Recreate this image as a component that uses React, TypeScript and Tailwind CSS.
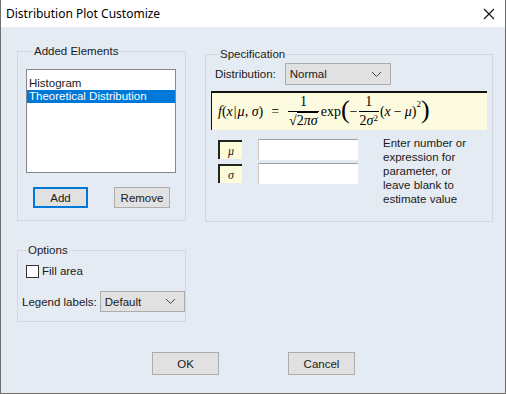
import React from "react";

const ui = { fontFamily: '"Liberation Sans", Arial, sans-serif' };
const title = { fontFamily: '"Noto Sans", "Open Sans", Arial, sans-serif' };
const serif = { fontFamily: '"Liberation Serif", "DejaVu Serif", serif' };

function Chevron() {
  return (
    <svg width="11" height="7" viewBox="0 0 11 7" className="text-[#444]">
      <path d="M1 1l4.5 4.5L10 1" fill="none" stroke="currentColor" strokeWidth="1" />
    </svg>
  );
}

function Select({ value, className }: { value: string; className: string }) {
  return (
    <div className={"flex items-center justify-between border border-[#adadad] bg-[#e1e1e1] pl-[4px] pr-[8px] " + className}>
      <span>{value}</span>
      <Chevron />
    </div>
  );
}

function Btn({ label, className }: { label: string; className: string }) {
  return (
    <div className={"flex items-center justify-center bg-[#e1e1e1] " + className}>{label}</div>
  );
}

function Frac({ top, bottom }: { top: React.ReactNode; bottom: React.ReactNode }) {
  return (
    <span className="inline-flex flex-col items-center mx-[1px] align-middle leading-none">
      <span className="px-[2px] pb-[2px]">{top}</span>
      <span className="border-t border-black px-[1px] pt-[2px]">{bottom}</span>
    </span>
  );
}

function Formula() {
  return (
    <div className="flex items-center text-[14px] text-black" style={serif}>
      <span className="italic">f</span>
      <span>(</span>
      <span className="italic">x</span>
      <span className="mx-[1px]">|</span>
      <span className="italic">μ</span>
      <span>,&nbsp;</span>
      <span className="italic">σ</span>
      <span>)</span>
      <span className="mx-[8px]">=</span>
      <Frac
        top="1"
        bottom={
          <span>
            √<span className="border-t border-black">2<span className="italic">πσ</span></span>
          </span>
        }
      />
      <span className="ml-[1px]">exp</span>
      <span className="text-[26px] leading-none -mt-[3px] font-light">(</span>
      <span>−</span>
      <Frac top="1" bottom={<span>2<span className="italic">σ</span><sup className="text-[9px]">2</sup></span>} />
      <span>(</span>
      <span className="italic">x</span>
      <span className="mx-[3px]">−</span>
      <span className="italic">μ</span>
      <span>)</span>
      <sup className="text-[9px] -mt-[6px]">2</sup>
      <span className="text-[26px] leading-none -mt-[3px] font-light">)</span>
    </div>
  );
}

function ParamRow({ sym }: { sym: string }) {
  return (
    <div className="flex items-center">
      <div className="ml-[7px] flex h-[19px] w-[24px] items-center justify-center border-l-2 border-t-2 border-[#222] bg-[#fdfbd9] text-[12px] italic" style={serif}>
        {sym}
      </div>
      <div className="ml-[16px] h-[21px] w-[100px] border-t border-[#a0a0a0] border-l border-l-[#c8c8c8] bg-white" />
    </div>
  );
}

export default function App() {
  return (
    <div className="w-[506px] h-[394px] flex flex-col border-x border-b border-[#6d6d6d] bg-[#e5ebf3] text-[11.5px] text-[#1a1a1a] leading-[16px]" style={ui}>
      <div className="h-[27px] bg-white flex items-center justify-between pl-[5px] pr-[10px] shrink-0">
        <span className="text-[12px] text-black" style={title}>Distribution Plot Customize</span>
        <svg width="12" height="12" viewBox="0 0 12 12">
          <path d="M1 1l10 10M11 1L1 11" stroke="#111" strokeWidth="1.1" />
        </svg>
      </div>

      <div className="flex pl-[16px] pt-[16px] gap-[19px]">
        <div className="w-[169px] flex flex-col gap-[21px]">
          <fieldset className="border border-[#d2d8e0] h-[178px] px-[8px] pt-[10px]">
            <legend className="ml-[7px] px-[1px]">Added Elements</legend>
            <div className="h-[104px] w-[150px] border border-[#828790] bg-white pt-[6px]">
              <div className="pl-[2px] h-[14px] leading-[14px]">Histogram</div>
              <div className="pl-[2px] h-[13px] leading-[13px] bg-[#0078d7] text-white">Theoretical Distribution</div>
            </div>
            <div className="flex mt-[14px]">
              <Btn label="Add" className="ml-[7px] w-[55px] h-[21px] border-2 border-[#0078d7]" />
              <Btn label="Remove" className="ml-[26px] w-[56px] h-[21px] border border-[#adadad]" />
            </div>
          </fieldset>

          <fieldset className="border border-[#d2d8e0] h-[80px] pl-[4px] pt-[5px]">
            <legend className="ml-[5px] px-[1px]">Options</legend>
            <div className="flex items-center ml-[4px]">
              <div className="w-[13px] h-[13px] border border-[#333] bg-white" />
              <span className="ml-[3px]">Fill area</span>
            </div>
            <div className="flex items-center mt-[12px]">
              <span>Legend labels:</span>
              <Select value="Default" className="ml-[3px] w-[85px] h-[21px]" />
            </div>
          </fieldset>
        </div>

        <fieldset className="mt-[3px] w-[288px] h-[176px] border border-[#d2d8e0] px-[5px] pt-[1px]">
          <legend className="ml-[8px] px-[1px]">Specification</legend>
          <div className="flex items-center ml-[4px]">
            <span>Distribution:</span>
            <Select value="Normal" className="ml-[9px] w-[106px] h-[22px]" />
          </div>
          <div className="mt-[6px] h-[39px] w-[276px] border-l border-t-2 border-[#111] bg-[#fdfbdf] pl-[6px] flex items-center">
            <Formula />
          </div>
          <div className="flex mt-[9px]">
            <div className="flex flex-col gap-[3px]">
              <ParamRow sym="μ" />
              <ParamRow sym="σ" />
            </div>
            <div className="ml-[25px] leading-[14px] -mt-[3px]">
              Enter number or
              <br />
              expression for
              <br />
              parameter, or
              <br />
              leave blank to
              <br />
              estimate value
            </div>
          </div>
        </fieldset>
      </div>

      <div className="flex mt-[30px] pl-[151px] gap-[69px]">
        <Btn label="OK" className="w-[67px] h-[23px] border border-[#adadad]" />
        <Btn label="Cancel" className="w-[67px] h-[23px] border border-[#adadad]" />
      </div>
    </div>
  );
}
